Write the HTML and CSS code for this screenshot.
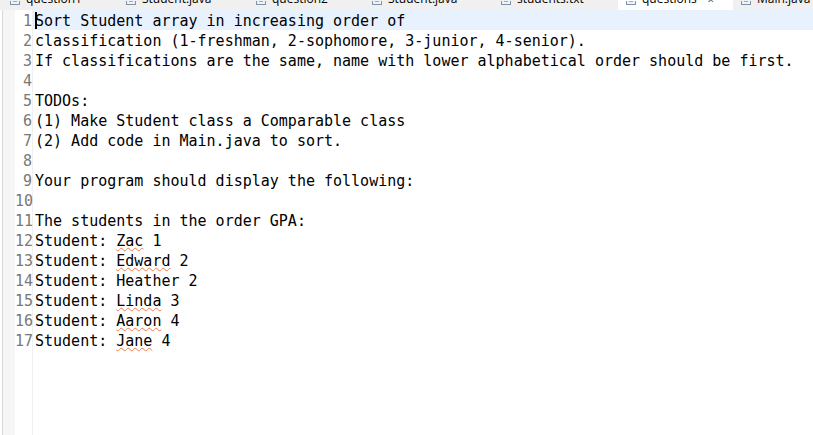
FILE: index.html
```html
<!DOCTYPE html>
<html>
<head>
<meta charset="utf-8">
<link rel="stylesheet" href="styles.css">
</head>
<body>
<div class="tabs">
  <div class="tab t1"><span class="ficon"></span><span class="tlabel">question1</span></div>
  <div class="tab t2"><span class="ficon"></span><span class="tlabel">Student.java</span></div>
  <div class="tab t3"><span class="ficon"></span><span class="tlabel">question2</span></div>
  <div class="tab t4"><span class="ficon"></span><span class="tlabel">Student.java</span></div>
  <div class="tab t5"><span class="ficon"></span><span class="tlabel">students.txt</span></div>
  <div class="tab t6 active"><span class="ficon"></span><span class="tlabel">questions</span><span class="close">✕</span></div>
  <div class="tab t7"><span class="ficon"></span><span class="tlabel">Main.java</span></div>
</div>
<div class="editor">
  <div class="edge"></div>
  <div class="overview"></div>
  <div class="body">
    <div class="line current"><span class="ln">1</span><span class="code"><span class="caret"></span>Sort Student array in increasing order of</span></div>
    <div class="line"><span class="ln">2</span><span class="code">classification (1-freshman, 2-sophomore, 3-junior, 4-senior).</span></div>
    <div class="line"><span class="ln">3</span><span class="code">If classifications are the same, name with lower alphabetical order should be first.</span></div>
    <div class="line"><span class="ln">4</span><span class="code"></span></div>
    <div class="line"><span class="ln">5</span><span class="code">TODOs:</span></div>
    <div class="line"><span class="ln">6</span><span class="code">(1) Make Student class a Comparable class</span></div>
    <div class="line"><span class="ln">7</span><span class="code">(2) Add code in Main.java to sort.</span></div>
    <div class="line"><span class="ln">8</span><span class="code"></span></div>
    <div class="line"><span class="ln">9</span><span class="code">Your program should display the following:</span></div>
    <div class="line"><span class="ln">10</span><span class="code"></span></div>
    <div class="line"><span class="ln">11</span><span class="code">The students in the order GPA:</span></div>
    <div class="line"><span class="ln">12</span><span class="code">Student: <span class="sp">Zac</span> 1</span></div>
    <div class="line"><span class="ln">13</span><span class="code">Student: <span class="sp">Edward</span> 2</span></div>
    <div class="line"><span class="ln">14</span><span class="code">Student: Heather 2</span></div>
    <div class="line"><span class="ln">15</span><span class="code">Student: <span class="sp">Linda</span> 3</span></div>
    <div class="line"><span class="ln">16</span><span class="code">Student: <span class="sp">Aaron</span> 4</span></div>
    <div class="line"><span class="ln">17</span><span class="code">Student: <span class="sp">Jane</span> 4</span></div>
    <div class="filler"><span class="ln"></span></div>
  </div>
</div>
</body>
</html>
```
FILE: styles.css
```css
html, body {
  margin: 0;
  padding: 0;
  background: #ffffff;
  overflow: hidden;
}
body {
  width: 813px;
  height: 435px;
  display: flex;
  flex-direction: column;
}
.tabs {
  height: 10px;
  flex: 0 0 10px;
  display: flex;
  background: #f0f0f0;
  overflow: hidden;
}
.tab {
  flex: 0 0 auto;
  height: 10px;
  display: flex;
  align-items: flex-end;
  gap: 6px;
  padding-left: 8px;
  box-sizing: border-box;
  overflow: hidden;
  font-family: "Open Sans", "Liberation Sans", sans-serif;
  font-size: 12px;
  color: #000;
}
.t1 { width: 118px; padding-left: 10px; }
.t2 { width: 130px; }
.t3 { width: 116px; }
.t4 { width: 129px; }
.t5 { width: 125px; }
.t6 { width: 115px; }
.t7 { flex: 1 1 auto; }
.tab.active { background: #ffffff; }
.ficon {
  width: 10px;
  height: 4px;
  margin-bottom: 5px;
  flex: 0 0 10px;
  border: 1px solid #7f93ad;
  border-top: 0;
  background: #eef2f8;
  box-sizing: border-box;
  position: relative;
}
.ficon::after {
  content: "";
  position: absolute;
  left: 2px;
  right: 2px;
  top: 0;
  height: 1px;
  background: #9aaac0;
}
.tlabel {
  line-height: 12px;
  margin-bottom: 5px;
  white-space: nowrap;
}
.close {
  font-size: 9px;
  line-height: 9px;
  margin-bottom: 6px;
  margin-left: 4px;
  color: #555;
}
.editor {
  flex: 1 1 auto;
  display: flex;
  background: #fff;
}
.edge {
  width: 2px;
  flex: 0 0 2px;
  background: #ffffff;
  border-right: 1px solid #d9d9d9;
}
.overview {
  width: 12px;
  flex: 0 0 12px;
  background: #f6f6f6;
}
.body {
  flex: 1 1 auto;
  display: flex;
  flex-direction: column;
  font-family: "DejaVu Sans Mono", "Liberation Mono", monospace;
  font-size: 15px;
}
.line {
  height: 20px;
  line-height: 20px;
  display: flex;
  white-space: pre;
}
.ln {
  width: 18px;
  flex: 0 0 18px;
  text-align: right;
  color: #787878;
  border-right: 1px solid #f0f0f0;
  padding-top: 1px;
  box-sizing: border-box;
}
.code {
  flex: 1 1 auto;
  padding-left: 2px;
  padding-top: 1px;
  color: #000;
  position: relative;
}
.line.current .code {
  background: #e8f2fe;
}
.caret {
  position: absolute;
  left: 2px;
  top: 2px;
  width: 2px;
  height: 17px;
  background: #000;
}
.sp {
  text-decoration: underline wavy #ef7d4a;
  text-decoration-thickness: 1px;
  text-underline-offset: 1px;
  text-decoration-skip-ink: none;
}
.filler {
  flex: 1 1 auto;
  display: flex;
}
```
